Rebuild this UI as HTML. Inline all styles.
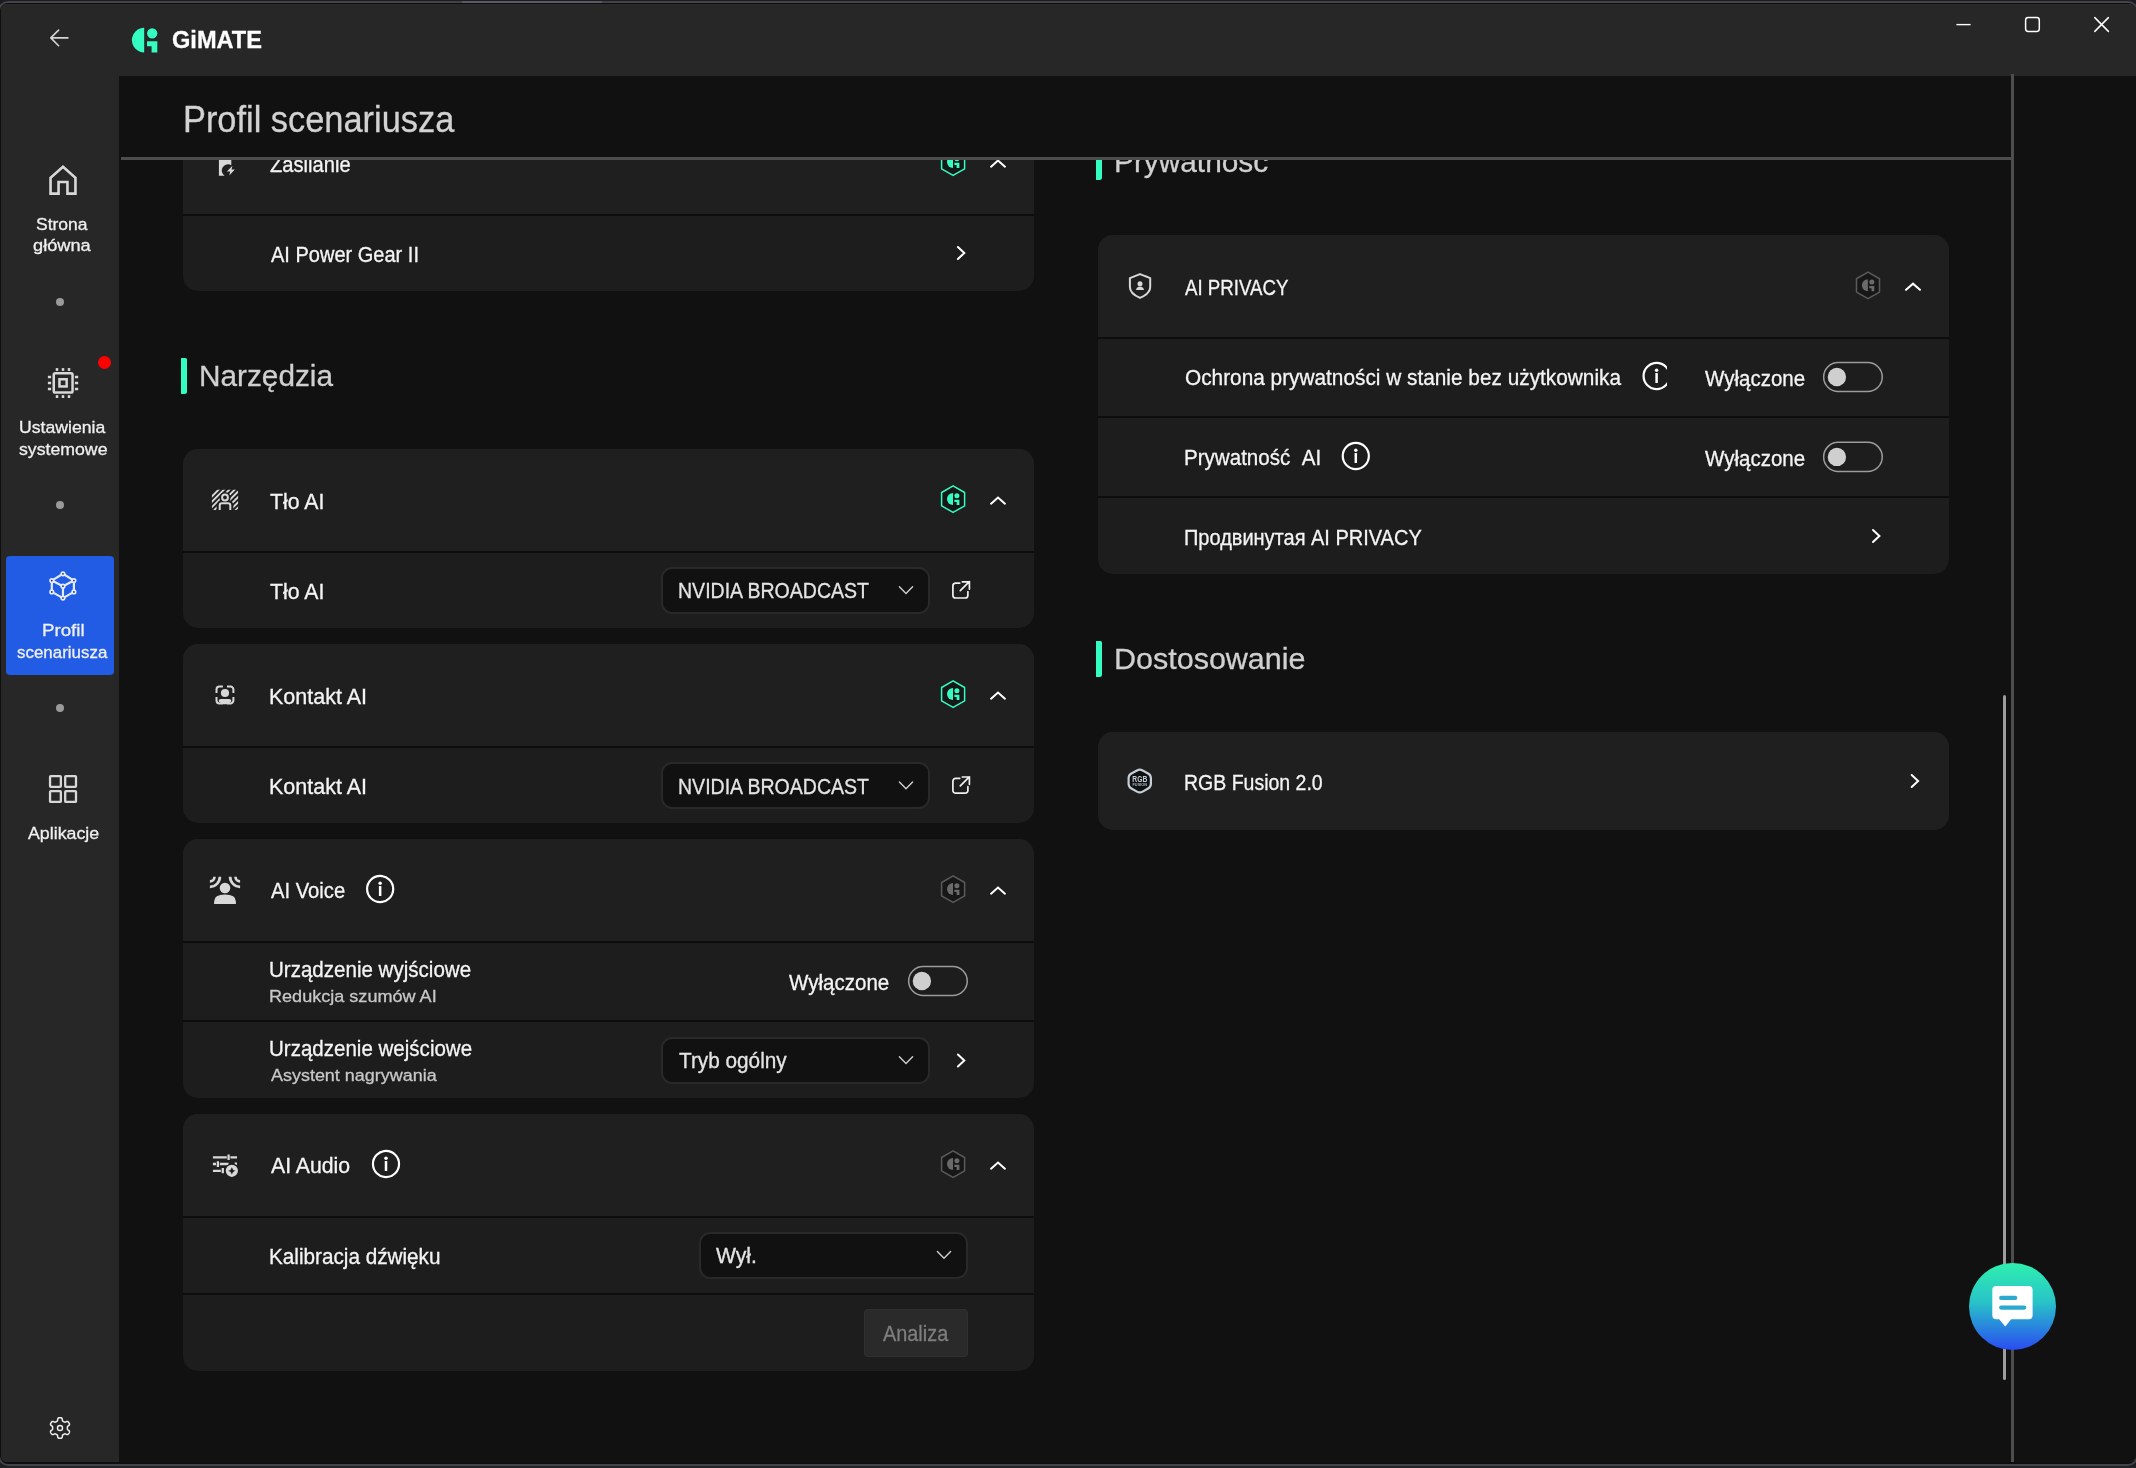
<!DOCTYPE html>
<html lang="pl">
<head>
<meta charset="utf-8">
<title>GiMATE - Profil scenariusza</title>
<style>
html,body{margin:0;padding:0;}
body{width:2136px;height:1468px;overflow:hidden;background:#1c1b22;position:relative;font-family:"Liberation Sans",sans-serif;}
.abs{position:absolute;}
.t{position:absolute;white-space:nowrap;display:block;transform-origin:0 0;-webkit-text-stroke:0.3px currentColor;}
#frame{position:absolute;left:-2px;top:1px;width:2140px;height:1465px;box-sizing:border-box;border:2px solid #444448;border-radius:10px;background:#0e0e10;}
#win{position:absolute;left:1px;top:4px;width:2135px;height:1458px;background:#272727;border-radius:5px;}
#content{position:absolute;left:119px;top:76px;width:2017px;height:1386px;background:#111111;border-bottom-right-radius:7px;}
#scroll{position:absolute;left:0;top:0;width:2136px;height:1468px;clip-path:inset(160px 0 0 0);will-change:transform;}
#ctext{position:absolute;left:0;top:0;width:2136px;height:1468px;will-change:transform;}
.card{position:absolute;background:#1d1d1d;border-radius:15px;overflow:hidden;}
.hd{position:absolute;left:0;top:0;width:100%;height:102px;background:#1f1f1f;}
.sep{position:absolute;left:0;width:100%;height:2px;background:#0d0d0d;}
.dd{position:absolute;box-sizing:border-box;background:#111111;border:2px solid #292929;border-radius:11px;}
.tog{position:absolute;box-sizing:border-box;width:59px;height:29.5px;border:2px solid #8c8c8c;border-radius:15px;}
.tog i{position:absolute;left:4px;top:3.8px;width:18px;height:18px;border-radius:50%;background:#d0d0d0;display:block;}
.bar{position:absolute;width:6px;height:36px;border-radius:0 1.5px 2.5px 0.5px;background:#33fdc0;}
.dot{position:absolute;width:8px;height:8px;border-radius:50%;background:#9a9a9a;}
svg{position:absolute;left:0;top:0;overflow:visible;}
</style>
</head>
<body>
<!-- desktop strip behind window + window frame -->
<div class="abs" style="left:0;top:1466px;width:2136px;height:2px;background:#212128"></div>
<div id="frame"></div>
<div class="abs" style="left:462px;top:1px;width:140px;height:2px;background:#5a5a62"></div>
<div id="win"></div>
<div id="content"></div>

<!-- header rule, right rule, scrollbar -->
<div class="abs" style="left:121px;top:157px;width:1890px;height:3px;background:#4d4d4d"></div>
<div class="abs" style="left:2011px;top:74px;width:3px;height:1388px;background:#4d4d4d"></div>

<!-- sidebar -->
<div class="abs" style="left:6px;top:556px;width:108px;height:119px;background:#225ce4;border-radius:4px"></div>
<div class="dot" style="left:56px;top:298px"></div>
<div class="dot" style="left:56px;top:501px"></div>
<div class="dot" style="left:56px;top:704px"></div>
<div class="abs" style="left:98.4px;top:355.5px;width:13px;height:13px;border-radius:50%;background:#ff0000"></div>

<div id="ctext">
<span class="t" style="left:172.00px;top:26px;font-size:24px;line-height:27px;transform:scaleX(0.9820);color:#ffffff;font-weight:700;">GiMATE</span>
<span class="t" style="left:183.00px;top:99px;font-size:36px;line-height:41px;transform:scaleX(0.9548);color:#d2d2d2;">Profil scenariusza</span>
<span class="t" style="left:36.00px;top:214px;font-size:17.4px;line-height:20px;transform:scaleX(1.0057);color:#f0f0f0;">Strona</span>
<span class="t" style="left:33.00px;top:235px;font-size:17.4px;line-height:20px;transform:scaleX(1.0481);color:#f0f0f0;">główna</span>
<span class="t" style="left:19.00px;top:417px;font-size:17.4px;line-height:20px;transform:scaleX(1.0143);color:#f0f0f0;">Ustawienia</span>
<span class="t" style="left:19.00px;top:439px;font-size:17.4px;line-height:20px;transform:scaleX(1.0173);color:#f0f0f0;">systemowe</span>
<span class="t" style="left:42.00px;top:620px;font-size:17.4px;line-height:20px;transform:scaleX(1.0758);color:#f0f0f0;">Profil</span>
<span class="t" style="left:17.00px;top:642px;font-size:17.4px;line-height:20px;transform:scaleX(0.9739);color:#f0f0f0;">scenariusza</span>
<span class="t" style="left:28.00px;top:823px;font-size:17.4px;line-height:20px;transform:scaleX(1.0234);color:#f0f0f0;">Aplikacje</span>
</div>

<svg width="2136" height="1468" viewBox="0 0 2136 1468" fill="none">
<path d="M67.9,37.9 H50.8 M58.6,30.1 L50.8,37.9 L58.6,45.7" stroke="#d4d4d4" stroke-width="1.6" stroke-linecap="round" stroke-linejoin="round"/>
<path d="M144.20,27.80 A12.30,12.30 0 0 0 144.20,52.40Z" fill="#33fdc0"/><circle cx="152.20" cy="33.30" r="5.15" fill="#33fdc0"/><path d="M147.00,41.30 H157.30 V52.40 H151.60 V46.20 H147.00Z" fill="#33fdc0"/>
<path d="M1956.4,24.6 H1970.6" stroke="#fff" stroke-width="1.4"/>
<rect x="2025.6" y="17.6" width="13.7" height="13.8" rx="2.6" stroke="#fff" stroke-width="1.5"/>
<path d="M2094.8,17.6 L2108.4,31.4 M2108.4,17.6 L2094.8,31.4" stroke="#fff" stroke-width="1.5" stroke-linecap="round"/>
<path d="M50.55,193.65 V177.75 L63,166.75 L75.45,177.75 V193.65 H67.45 V182.05 H58.55 V193.65 Z" stroke="#d8d8d8" stroke-width="2.6" stroke-linejoin="miter"/>
<rect x="53.75" y="373.35" width="18.8" height="19.2" rx="1.6" stroke="#d8d8d8" stroke-width="2.5"/>
<rect x="59.45" y="379.25" width="7.2" height="7.2" stroke="#d8d8d8" stroke-width="2.5"/>
<rect x="55.75" y="368.1" width="2.5" height="2.8" fill="#d8d8d8"/>
<rect x="55.75" y="395.1" width="2.5" height="2.9" fill="#d8d8d8"/>
<rect x="61.75" y="368.1" width="2.5" height="2.8" fill="#d8d8d8"/>
<rect x="61.75" y="395.1" width="2.5" height="2.9" fill="#d8d8d8"/>
<rect x="67.75" y="368.1" width="2.5" height="2.8" fill="#d8d8d8"/>
<rect x="67.75" y="395.1" width="2.5" height="2.9" fill="#d8d8d8"/>
<rect x="47.9" y="375.75" width="3.2" height="2.5" fill="#d8d8d8"/>
<rect x="74.9" y="375.75" width="3.3" height="2.5" fill="#d8d8d8"/>
<rect x="47.9" y="381.75" width="3.2" height="2.5" fill="#d8d8d8"/>
<rect x="74.9" y="381.75" width="3.3" height="2.5" fill="#d8d8d8"/>
<rect x="47.9" y="387.75" width="3.2" height="2.5" fill="#d8d8d8"/>
<rect x="74.9" y="387.75" width="3.3" height="2.5" fill="#d8d8d8"/>
<path d="M62.97,573.8 L51.8,580.6 M62.97,573.8 L73.9,580.6 M51.8,580.6 L62.97,586.2 M73.9,580.6 L62.97,586.2 M51.8,580.6 L51.8,591.9 M73.9,580.6 L73.9,591.9 M51.8,591.9 L62.97,598.1 M73.9,591.9 L62.97,598.1 M62.97,586.2 L62.97,598.1 " stroke="#e3ebff" stroke-width="2.2" stroke-linecap="round"/>
<circle cx="62.97" cy="573.8" r="1.75" fill="#1c2f8f" stroke="#e3ebff" stroke-width="1.7"/>
<circle cx="51.8" cy="580.6" r="1.75" fill="#1c2f8f" stroke="#e3ebff" stroke-width="1.7"/>
<circle cx="73.9" cy="580.6" r="1.75" fill="#1c2f8f" stroke="#e3ebff" stroke-width="1.7"/>
<circle cx="62.97" cy="586.2" r="1.75" fill="#1c2f8f" stroke="#e3ebff" stroke-width="1.7"/>
<circle cx="51.8" cy="591.9" r="1.75" fill="#1c2f8f" stroke="#e3ebff" stroke-width="1.7"/>
<circle cx="73.9" cy="591.9" r="1.75" fill="#1c2f8f" stroke="#e3ebff" stroke-width="1.7"/>
<circle cx="62.97" cy="598.1" r="1.75" fill="#1c2f8f" stroke="#e3ebff" stroke-width="1.7"/>
<rect x="50.05" y="776.05" width="10.8" height="10.8" rx="0.8" stroke="#d8d8d8" stroke-width="2.3"/>
<rect x="50.05" y="791.15" width="10.8" height="10.8" rx="0.8" stroke="#d8d8d8" stroke-width="2.3"/>
<rect x="65.2" y="776.05" width="10.8" height="10.8" rx="0.8" stroke="#d8d8d8" stroke-width="2.3"/>
<rect x="65.2" y="791.15" width="10.8" height="10.8" rx="0.8" stroke="#d8d8d8" stroke-width="2.3"/>
<path d="M67.35,1428.00 L67.35,1427.74 L67.34,1427.49 L67.35,1427.23 L67.37,1426.96 L67.46,1426.68 L67.72,1426.36 L68.22,1425.95 L68.87,1425.46 L69.33,1424.97 L69.51,1424.54 L69.51,1424.16 L69.42,1423.81 L69.29,1423.47 L69.14,1423.14 L68.96,1422.83 L68.77,1422.52 L68.57,1422.22 L68.34,1421.94 L68.08,1421.69 L67.75,1421.49 L67.29,1421.44 L66.64,1421.59 L65.89,1421.90 L65.28,1422.14 L64.87,1422.19 L64.58,1422.13 L64.34,1422.02 L64.12,1421.90 L63.90,1421.76 L63.67,1421.63 L63.45,1421.51 L63.23,1421.38 L63.00,1421.25 L62.79,1421.10 L62.59,1420.88 L62.44,1420.50 L62.34,1419.85 L62.23,1419.05 L62.04,1418.40 L61.76,1418.03 L61.43,1417.84 L61.08,1417.74 L60.72,1417.69 L60.36,1417.66 L60.00,1417.65 L59.64,1417.66 L59.28,1417.69 L58.92,1417.74 L58.57,1417.84 L58.24,1418.03 L57.96,1418.40 L57.77,1419.05 L57.66,1419.85 L57.56,1420.50 L57.41,1420.88 L57.21,1421.10 L57.00,1421.25 L56.77,1421.38 L56.55,1421.51 L56.33,1421.63 L56.10,1421.76 L55.88,1421.90 L55.66,1422.02 L55.42,1422.13 L55.13,1422.19 L54.72,1422.14 L54.11,1421.90 L53.36,1421.59 L52.71,1421.44 L52.25,1421.49 L51.92,1421.69 L51.66,1421.94 L51.43,1422.22 L51.23,1422.52 L51.04,1422.83 L50.86,1423.14 L50.71,1423.47 L50.58,1423.81 L50.49,1424.16 L50.49,1424.54 L50.67,1424.97 L51.13,1425.46 L51.78,1425.95 L52.28,1426.36 L52.54,1426.68 L52.63,1426.96 L52.65,1427.23 L52.66,1427.49 L52.65,1427.74 L52.65,1428.00 L52.65,1428.26 L52.66,1428.51 L52.65,1428.77 L52.63,1429.04 L52.54,1429.32 L52.28,1429.64 L51.78,1430.05 L51.13,1430.54 L50.67,1431.03 L50.49,1431.46 L50.49,1431.84 L50.58,1432.19 L50.71,1432.53 L50.86,1432.86 L51.04,1433.17 L51.23,1433.48 L51.43,1433.78 L51.66,1434.06 L51.92,1434.31 L52.25,1434.51 L52.71,1434.56 L53.36,1434.41 L54.11,1434.10 L54.72,1433.86 L55.13,1433.81 L55.42,1433.87 L55.66,1433.98 L55.88,1434.10 L56.10,1434.24 L56.32,1434.37 L56.55,1434.49 L56.77,1434.62 L57.00,1434.75 L57.21,1434.90 L57.41,1435.12 L57.56,1435.50 L57.66,1436.15 L57.77,1436.95 L57.96,1437.60 L58.24,1437.97 L58.57,1438.16 L58.92,1438.26 L59.28,1438.31 L59.64,1438.34 L60.00,1438.35 L60.36,1438.34 L60.72,1438.31 L61.08,1438.26 L61.43,1438.16 L61.76,1437.97 L62.04,1437.60 L62.23,1436.95 L62.34,1436.15 L62.44,1435.50 L62.59,1435.12 L62.79,1434.90 L63.00,1434.75 L63.23,1434.62 L63.45,1434.49 L63.67,1434.37 L63.90,1434.24 L64.12,1434.10 L64.34,1433.98 L64.58,1433.87 L64.87,1433.81 L65.28,1433.86 L65.89,1434.10 L66.64,1434.41 L67.29,1434.56 L67.75,1434.51 L68.08,1434.31 L68.34,1434.06 L68.57,1433.78 L68.77,1433.48 L68.96,1433.17 L69.14,1432.86 L69.29,1432.53 L69.42,1432.19 L69.51,1431.84 L69.51,1431.46 L69.33,1431.03 L68.87,1430.54 L68.22,1430.05 L67.72,1429.64 L67.46,1429.32 L67.37,1429.04 L67.35,1428.77 L67.34,1428.51 L67.35,1428.26Z" stroke="#f0f0f0" stroke-width="1.5" stroke-linejoin="round"/><circle cx="60" cy="1428" r="2.55" stroke="#f0f0f0" stroke-width="1.4"/>
</svg>

<div id="scroll">
<div class="card" style="left:183px;top:112px;width:851px;height:179px"><div class="hd"></div><div class="sep" style="top:102px"></div></div>
<div class="card" style="left:183px;top:449px;width:851px;height:179px"><div class="hd"></div><div class="sep" style="top:102px"></div></div>
<div class="card" style="left:183px;top:644px;width:851px;height:179px"><div class="hd"></div><div class="sep" style="top:102px"></div></div>
<div class="card" style="left:183px;top:839px;width:851px;height:259px"><div class="hd"></div><div class="sep" style="top:102px"></div><div class="sep" style="top:181px"></div></div>
<div class="card" style="left:183px;top:1114px;width:851px;height:256.5px"><div class="hd"></div><div class="sep" style="top:102px"></div><div class="sep" style="top:179px"></div></div>
<div class="card" style="left:1098px;top:235px;width:851px;height:339px"><div class="hd"></div><div class="sep" style="top:102px"></div><div class="sep" style="top:181px"></div><div class="sep" style="top:261px"></div></div>
<div class="card" style="left:1098px;top:732px;width:851px;height:98px"><div class="hd"></div></div>
<div class="bar" style="left:181px;top:358px"></div>
<div class="bar" style="left:1096px;top:144px"></div>
<div class="bar" style="left:1096px;top:641px"></div>
<div class="dd" style="left:661px;top:567px;width:268.5px;height:46.5px"></div>
<div class="dd" style="left:661px;top:762px;width:268.5px;height:46.5px"></div>
<div class="dd" style="left:661px;top:1037px;width:268.5px;height:46.5px"></div>
<div class="dd" style="left:699px;top:1232px;width:268.5px;height:46.5px"></div>
<div class="abs" style="left:864px;top:1309px;width:104px;height:48px;box-sizing:border-box;background:#2a2a2a;border:1px solid #303030;border-radius:4px"></div>
<span class="t" style="left:270.00px;top:153px;font-size:21.3px;line-height:24px;transform:scaleX(0.9465);color:#f4f4f4;">Zasilanie</span>
<span class="t" style="left:271.00px;top:243px;font-size:21.3px;line-height:24px;transform:scaleX(0.9398);color:#f4f4f4;">AI Power Gear II</span>
<span class="t" style="left:199.00px;top:359px;font-size:30.0px;line-height:33px;transform:scaleX(0.9924);color:#d0d0d0;">Narzędzia</span>
<span class="t" style="left:270.00px;top:490px;font-size:21.3px;line-height:24px;transform:scaleX(0.9979);color:#f4f4f4;">Tło AI</span>
<span class="t" style="left:270.00px;top:580px;font-size:21.3px;line-height:24px;transform:scaleX(0.9979);color:#f4f4f4;">Tło AI</span>
<span class="t" style="left:678.00px;top:579px;font-size:21.3px;line-height:24px;transform:scaleX(0.9171);color:#e4e4e4;">NVIDIA BROADCAST</span>
<span class="t" style="left:269.00px;top:685px;font-size:21.3px;line-height:24px;transform:scaleX(1.0102);color:#f4f4f4;">Kontakt AI</span>
<span class="t" style="left:269.00px;top:775px;font-size:21.3px;line-height:24px;transform:scaleX(1.0102);color:#f4f4f4;">Kontakt AI</span>
<span class="t" style="left:678.00px;top:775px;font-size:21.3px;line-height:24px;transform:scaleX(0.9171);color:#e4e4e4;">NVIDIA BROADCAST</span>
<span class="t" style="left:271.00px;top:879px;font-size:21.3px;line-height:24px;transform:scaleX(0.9495);color:#f4f4f4;">AI Voice</span>
<span class="t" style="left:269.00px;top:958px;font-size:21.3px;line-height:24px;transform:scaleX(0.9645);color:#f4f4f4;">Urządzenie wyjściowe</span>
<span class="t" style="left:269.00px;top:986px;font-size:17.4px;line-height:20px;transform:scaleX(1.0389);color:#c8c8c8;">Redukcja szumów AI</span>
<span class="t" style="left:789.00px;top:970px;font-size:21.900000000000002px;line-height:25px;transform:scaleX(0.9378);color:#f4f4f4;">Wyłączone</span>
<span class="t" style="left:269.00px;top:1037px;font-size:21.3px;line-height:24px;transform:scaleX(0.9640);color:#f4f4f4;">Urządzenie wejściowe</span>
<span class="t" style="left:271.00px;top:1065px;font-size:17.4px;line-height:20px;transform:scaleX(1.0321);color:#c8c8c8;">Asystent nagrywania</span>
<span class="t" style="left:679.00px;top:1049px;font-size:21.3px;line-height:24px;transform:scaleX(0.9746);color:#e4e4e4;">Tryb ogólny</span>
<span class="t" style="left:271.00px;top:1154px;font-size:21.3px;line-height:24px;transform:scaleX(0.9975);color:#f4f4f4;">AI Audio</span>
<span class="t" style="left:269.00px;top:1245px;font-size:21.3px;line-height:24px;transform:scaleX(0.9723);color:#f4f4f4;">Kalibracja dźwięku</span>
<span class="t" style="left:716.00px;top:1244px;font-size:21.3px;line-height:24px;transform:scaleX(0.9933);color:#e4e4e4;">Wył.</span>
<span class="t" style="left:883.00px;top:1322px;font-size:21.3px;line-height:24px;transform:scaleX(0.9332);color:#7e7e7e;">Analiza</span>
<span class="t" style="left:1114.00px;top:145px;font-size:30.0px;line-height:33px;transform:scaleX(0.9940);color:#d0d0d0;">Prywatność</span>
<span class="t" style="left:1185.00px;top:276px;font-size:21.3px;line-height:24px;transform:scaleX(0.8770);color:#f4f4f4;">AI PRIVACY</span>
<span class="t" style="left:1185.00px;top:366px;font-size:21.3px;line-height:24px;transform:scaleX(0.9770);color:#f4f4f4;">Ochrona prywatności w stanie bez użytkownika</span>
<span class="t" style="left:1705.00px;top:366px;font-size:21.900000000000002px;line-height:25px;transform:scaleX(0.9369);color:#f4f4f4;">Wyłączone</span>
<span class="t" style="left:1184.00px;top:446px;font-size:21.3px;line-height:24px;transform:scaleX(0.9655);color:#f4f4f4;">Prywatność  AI</span>
<span class="t" style="left:1705.00px;top:446px;font-size:21.900000000000002px;line-height:25px;transform:scaleX(0.9369);color:#f4f4f4;">Wyłączone</span>
<span class="t" style="left:1184.00px;top:526px;font-size:21.3px;line-height:24px;transform:scaleX(0.9383);color:#f4f4f4;">Продвинутая AI PRIVACY</span>
<span class="t" style="left:1114.00px;top:642px;font-size:30.0px;line-height:33px;transform:scaleX(1.0162);color:#d0d0d0;">Dostosowanie</span>
<span class="t" style="left:1184.00px;top:771px;font-size:21.3px;line-height:24px;transform:scaleX(0.9154);color:#f4f4f4;">RGB Fusion 2.0</span>
<svg width="2136" height="1468" viewBox="0 0 2136 1468" fill="none">
<defs><clipPath id="ci"><rect x="1630" y="355" width="37" height="45"/></clipPath><clipPath id="ctlo"><rect x="211.9" y="489.8" width="26.2" height="20.3" rx="2.5"/></clipPath></defs>
<path d="M218.9,150 H231.3 V165.3 A5.9,5.9 0 0 0 224.6,175.7 H218.9Z" fill="#d8d8d8"/>
<path d="M232.4,165.8 L226.9,171.6 H230.2 L229.3,175.6 L234.8,169.6 H231.6Z" fill="#d8d8d8"/>
<g clip-path="url(#ctlo)"><path d="M194.30,514.00 L222.30,486.00 M199.65,514.00 L227.65,486.00 M205.00,514.00 L233.00,486.00 M210.35,514.00 L238.35,486.00 M215.70,514.00 L243.70,486.00 M221.05,514.00 L249.05,486.00 M226.40,514.00 L254.40,486.00 M231.75,514.00 L259.75,486.00 M237.10,514.00 L265.10,486.00 M242.45,514.00 L270.45,486.00 M247.80,514.00 L275.80,486.00 " stroke="#d8d8d8" stroke-width="1.9"/><circle cx="225" cy="497.5" r="5.6" fill="#1f1f1f"/><path d="M216.6,512 V505 a4.4,4.4 0 0 1 4.4,-4.4 h8 a4.4,4.4 0 0 1 4.4,4.4 V512Z" fill="#1f1f1f"/><circle cx="225" cy="497.5" r="2.9" stroke="#d8d8d8" stroke-width="2"/><path d="M219.7,511 V505.4 a2.2,2.2 0 0 1 2.2,-2.2 h6.2 a2.2,2.2 0 0 1 2.2,2.2 V511" stroke="#d8d8d8" stroke-width="2"/></g>
<path d="M216.5,692.9 V689.5 a3,3 0 0 1 3,-3 H222.9 M227.0,686.5 H230.4 a3,3 0 0 1 3,3 V692.9 M233.4,697.0 V700.4 a3,3 0 0 1 -3,3 H227.0 M222.9,703.4 H219.5 a3,3 0 0 1 -3,-3 V697.0" stroke="#d8d8d8" stroke-width="2"/>
<circle cx="225" cy="693" r="4.1" fill="#d8d8d8"/>
<path d="M218.6,701.2 Q218.6,698.9 221,698.9 H229 Q231.4,698.9 231.4,701.2 Q229,704.3 225,704.3 Q221,704.3 218.6,701.2Z" fill="#d8d8d8"/>
<circle cx="225" cy="888" r="5.3" fill="#d8d8d8"/>
<path d="M214.1,904 V901.5 Q214.1,894.6 225,894.6 Q235.9,894.6 235.9,901.5 V904Z" fill="#d8d8d8"/>
<path d="M214.50,876.8 A4.6,4.6 0 0 1 209.90,881.40" stroke="#d8d8d8" stroke-width="2.7"/>
<path d="M219.90,876.8 A10,10 0 0 1 209.90,886.80" stroke="#d8d8d8" stroke-width="2.7"/>
<path d="M235.50,876.8 A4.6,4.6 0 0 0 240.10,881.40" stroke="#d8d8d8" stroke-width="2.7"/>
<path d="M230.10,876.8 A10,10 0 0 0 240.10,886.80" stroke="#d8d8d8" stroke-width="2.7"/>
<path d="M212.9,1157.4 H226.8 M230.4,1157.4 H237 M212.9,1164 H216 M219.8,1164 H228.6 M234.7,1163.6 H237 M212.9,1170.8 H220.9" stroke="#d8d8d8" stroke-width="2.3"/>
<path d="M228.6,1154.6 V1160.1 M217.9,1161.3 V1166.9 M222.8,1168.1 V1173.2" stroke="#d8d8d8" stroke-width="2.3"/>
<circle cx="231.85" cy="1170.8" r="7.4" fill="#1f1f1f"/><circle cx="231.85" cy="1170.8" r="6.1" fill="#d8d8d8"/>
<path d="M231.85,1167.2 Q232.45,1170.2 235.45,1170.8 Q232.45,1171.3999999999999 231.85,1174.3999999999999 Q231.25,1171.3999999999999 228.25,1170.8 Q231.25,1170.2 231.85,1167.2Z" fill="#1f1f1f"/>
<path d="M1140,274.1 L1150.2,278.1 V287 Q1150.2,293.6 1140,297.9 Q1129.9,293.6 1129.9,287 V278.1Z" stroke="#d8d8d8" stroke-width="2" stroke-linejoin="round"/>
<circle cx="1140" cy="283.8" r="2.5" fill="#d8d8d8"/><path d="M1136,290.1 Q1136.6,286.6 1140,286.6 Q1143.4,286.6 1144,290.1Z" fill="#d8d8d8"/>
<path d="M1137.00,770.45 Q1139.80,768.90 1142.59,770.46 L1148.11,773.54 Q1150.90,775.10 1150.90,778.30 L1150.90,783.70 Q1150.90,786.90 1148.12,788.48 L1142.58,791.62 Q1139.80,793.20 1137.01,791.63 L1131.39,788.47 Q1128.60,786.90 1128.60,783.70 L1128.60,778.30 Q1128.60,775.10 1131.40,773.55 Z" fill="#0e1114" stroke="#c6cdd4" stroke-width="2.2" stroke-linejoin="round"/>
<text x="1139.8" y="782.3" text-anchor="middle" font-family="Liberation Sans, sans-serif" font-weight="700" font-size="9.2" textLength="15" lengthAdjust="spacingAndGlyphs" fill="#c6cdd4">RGB</text>
<text x="1139.8" y="785.7" text-anchor="middle" font-family="Liberation Sans, sans-serif" font-weight="700" font-size="3.3" textLength="14.6" lengthAdjust="spacingAndGlyphs" fill="#aeb5bc">FUSION</text>
<path d="M953.10,148.85 L964.60,155.50 L964.60,168.80 L953.10,175.45 L941.60,168.80 L941.60,155.50Z" fill="#171717" stroke="#33fdc0" stroke-width="1.5" stroke-linejoin="round"/><path d="M953.00,156.05 A6.00,6.00 0 0 0 953.00,168.05Z" fill="#33fdc0"/><circle cx="956.91" cy="158.73" r="2.51" fill="#33fdc0"/><path d="M954.37,162.64 H959.40 V168.05 H956.61 V165.03 H954.37Z" fill="#33fdc0"/>
<path d="M991.05,166.70 L998.00,160.50 L1004.95,166.70" stroke="#fff" stroke-width="2" stroke-linecap="round" stroke-linejoin="miter"/>
<path d="M953.10,485.85 L964.60,492.50 L964.60,505.80 L953.10,512.45 L941.60,505.80 L941.60,492.50Z" fill="#171717" stroke="#33fdc0" stroke-width="1.5" stroke-linejoin="round"/><path d="M953.00,493.05 A6.00,6.00 0 0 0 953.00,505.05Z" fill="#33fdc0"/><circle cx="956.91" cy="495.73" r="2.51" fill="#33fdc0"/><path d="M954.37,499.64 H959.40 V505.05 H956.61 V502.03 H954.37Z" fill="#33fdc0"/>
<path d="M991.05,503.70 L998.00,497.50 L1004.95,503.70" stroke="#fff" stroke-width="2" stroke-linecap="round" stroke-linejoin="miter"/>
<path d="M953.10,680.85 L964.60,687.50 L964.60,700.80 L953.10,707.45 L941.60,700.80 L941.60,687.50Z" fill="#171717" stroke="#33fdc0" stroke-width="1.5" stroke-linejoin="round"/><path d="M953.00,688.05 A6.00,6.00 0 0 0 953.00,700.05Z" fill="#33fdc0"/><circle cx="956.91" cy="690.73" r="2.51" fill="#33fdc0"/><path d="M954.37,694.64 H959.40 V700.05 H956.61 V697.03 H954.37Z" fill="#33fdc0"/>
<path d="M991.05,698.70 L998.00,692.50 L1004.95,698.70" stroke="#fff" stroke-width="2" stroke-linecap="round" stroke-linejoin="miter"/>
<path d="M953.10,875.85 L964.60,882.50 L964.60,895.80 L953.10,902.45 L941.60,895.80 L941.60,882.50Z" fill="#171717" stroke="#5a5a5a" stroke-width="1.5" stroke-linejoin="round"/><path d="M953.00,883.05 A6.00,6.00 0 0 0 953.00,895.05Z" fill="#6a6a6a"/><circle cx="956.91" cy="885.73" r="2.51" fill="#6a6a6a"/><path d="M954.37,889.64 H959.40 V895.05 H956.61 V892.03 H954.37Z" fill="#6a6a6a"/>
<path d="M991.05,893.70 L998.00,887.50 L1004.95,893.70" stroke="#fff" stroke-width="2" stroke-linecap="round" stroke-linejoin="miter"/>
<path d="M953.10,1150.85 L964.60,1157.50 L964.60,1170.80 L953.10,1177.45 L941.60,1170.80 L941.60,1157.50Z" fill="#171717" stroke="#5a5a5a" stroke-width="1.5" stroke-linejoin="round"/><path d="M953.00,1158.05 A6.00,6.00 0 0 0 953.00,1170.05Z" fill="#6a6a6a"/><circle cx="956.91" cy="1160.73" r="2.51" fill="#6a6a6a"/><path d="M954.37,1164.64 H959.40 V1170.05 H956.61 V1167.03 H954.37Z" fill="#6a6a6a"/>
<path d="M991.05,1168.70 L998.00,1162.50 L1004.95,1168.70" stroke="#fff" stroke-width="2" stroke-linecap="round" stroke-linejoin="miter"/>
<path d="M1868.00,272.10 L1879.50,278.75 L1879.50,292.05 L1868.00,298.70 L1856.50,292.05 L1856.50,278.75Z" fill="#171717" stroke="#5a5a5a" stroke-width="1.5" stroke-linejoin="round"/><path d="M1867.90,279.30 A6.00,6.00 0 0 0 1867.90,291.30Z" fill="#6a6a6a"/><circle cx="1871.81" cy="281.98" r="2.51" fill="#6a6a6a"/><path d="M1869.27,285.89 H1874.30 V291.30 H1871.51 V288.28 H1869.27Z" fill="#6a6a6a"/>
<path d="M1906.05,289.85 L1913.00,283.65 L1919.95,289.85" stroke="#fff" stroke-width="2" stroke-linecap="round" stroke-linejoin="miter"/>
<path d="M957.90,247.00 L964.30,253.00 L957.90,259.00" stroke="#fff" stroke-width="2" stroke-linecap="round" stroke-linejoin="miter"/>
<path d="M957.90,1054.50 L964.30,1060.50 L957.90,1066.50" stroke="#fff" stroke-width="2" stroke-linecap="round" stroke-linejoin="miter"/>
<path d="M1873.00,530.00 L1879.40,536.00 L1873.00,542.00" stroke="#fff" stroke-width="2" stroke-linecap="round" stroke-linejoin="miter"/>
<path d="M1911.70,775.00 L1918.10,781.00 L1911.70,787.00" stroke="#fff" stroke-width="2" stroke-linecap="round" stroke-linejoin="miter"/>
<path d="M899.40,586.80 L906.00,593.50 L912.60,586.80" stroke="#cfcfcf" stroke-width="1.4" stroke-linecap="round" stroke-linejoin="miter"/>
<path d="M899.40,782.00 L906.00,788.70 L912.60,782.00" stroke="#cfcfcf" stroke-width="1.4" stroke-linecap="round" stroke-linejoin="miter"/>
<path d="M899.40,1056.80 L906.00,1063.50 L912.60,1056.80" stroke="#cfcfcf" stroke-width="1.4" stroke-linecap="round" stroke-linejoin="miter"/>
<path d="M937.40,1251.60 L944.00,1258.30 L950.60,1251.60" stroke="#cfcfcf" stroke-width="1.4" stroke-linecap="round" stroke-linejoin="miter"/>
<path d="M959.70,583.20 H955.70 a2.8,2.8 0 0 0 -2.8,2.8 V595.20 a2.8,2.8 0 0 0 2.8,2.8 H965.10 a2.8,2.8 0 0 0 2.8,-2.8 V591.50" stroke="#f0f0f0" stroke-width="1.7" stroke-linecap="round"/><path d="M960.30,590.60 L969.30,581.70 M962.30,581.80 H969.40 V589.10" stroke="#f0f0f0" stroke-width="1.7" stroke-linecap="round" stroke-linejoin="miter"/>
<path d="M959.70,778.40 H955.70 a2.8,2.8 0 0 0 -2.8,2.8 V790.40 a2.8,2.8 0 0 0 2.8,2.8 H965.10 a2.8,2.8 0 0 0 2.8,-2.8 V786.70" stroke="#f0f0f0" stroke-width="1.7" stroke-linecap="round"/><path d="M960.30,785.80 L969.30,776.90 M962.30,777.00 H969.40 V784.30" stroke="#f0f0f0" stroke-width="1.7" stroke-linecap="round" stroke-linejoin="miter"/>
<rect x="908.65" y="966.45" width="58.6" height="29.1" rx="14.55" stroke="#9c9c9c" stroke-width="1.5"/><circle cx="921.9" cy="981" r="9.2" fill="#cfcfcf"/>
<rect x="1823.65" y="362.45" width="58.6" height="29.1" rx="14.55" stroke="#9c9c9c" stroke-width="1.5"/><circle cx="1836.9" cy="377" r="9.2" fill="#cfcfcf"/>
<rect x="1823.65" y="442.34999999999997" width="58.6" height="29.1" rx="14.55" stroke="#9c9c9c" stroke-width="1.5"/><circle cx="1836.9" cy="456.9" r="9.2" fill="#cfcfcf"/>
<circle cx="380.15" cy="889" r="13.05" stroke="#fff" stroke-width="2.2"/><circle cx="380.15" cy="883.3" r="1.75" fill="#fff"/><rect x="378.9" y="886" width="2.5" height="10.1" rx="0.6" fill="#fff"/>
<circle cx="386" cy="1164" r="13.05" stroke="#fff" stroke-width="2.2"/><circle cx="386" cy="1158.3" r="1.75" fill="#fff"/><rect x="384.75" y="1161" width="2.5" height="10.1" rx="0.6" fill="#fff"/>
<circle cx="1355.8" cy="456" r="13.05" stroke="#fff" stroke-width="2.2"/><circle cx="1355.8" cy="450.3" r="1.75" fill="#fff"/><rect x="1354.55" y="453" width="2.5" height="10.1" rx="0.6" fill="#fff"/>
<g clip-path="url(#ci)"><circle cx="1656.6" cy="376" r="13.05" stroke="#fff" stroke-width="2.2"/><circle cx="1656.6" cy="370.3" r="1.75" fill="#fff"/><rect x="1655.35" y="373" width="2.5" height="10.1" rx="0.6" fill="#fff"/></g>
</svg>
</div>

<!-- scrollbar thumb + chat bubble -->
<div class="abs" style="left:2002.5px;top:695px;width:3px;height:685px;border-radius:2px;background:#9d9d9d"></div>
<div class="abs" style="left:1969px;top:1263px;width:87px;height:87px;border-radius:50%;background:linear-gradient(180deg,#2ff0ae 0%,#28c3c8 45%,#2a4cf2 100%)"></div>
<svg width="2136" height="1468" viewBox="0 0 2136 1468" fill="none">
<path d="M1996.3,1286.1 H2028.6 a4,4 0 0 1 4,4 V1315.2 a4,4 0 0 1 -4,4 H2011.2 L2005.2,1326.6 L1999.2,1319.2 H1996.3 a4,4 0 0 1 -4,-4 V1290.1 a4,4 0 0 1 4,-4Z" fill="#fff"/><path d="M2001.2,1297.9 H2015.2 M2001.2,1307.6 H2024.2" stroke="#2ba9d0" stroke-width="4.2" stroke-linecap="round"/>
</svg>
</body>
</html>
